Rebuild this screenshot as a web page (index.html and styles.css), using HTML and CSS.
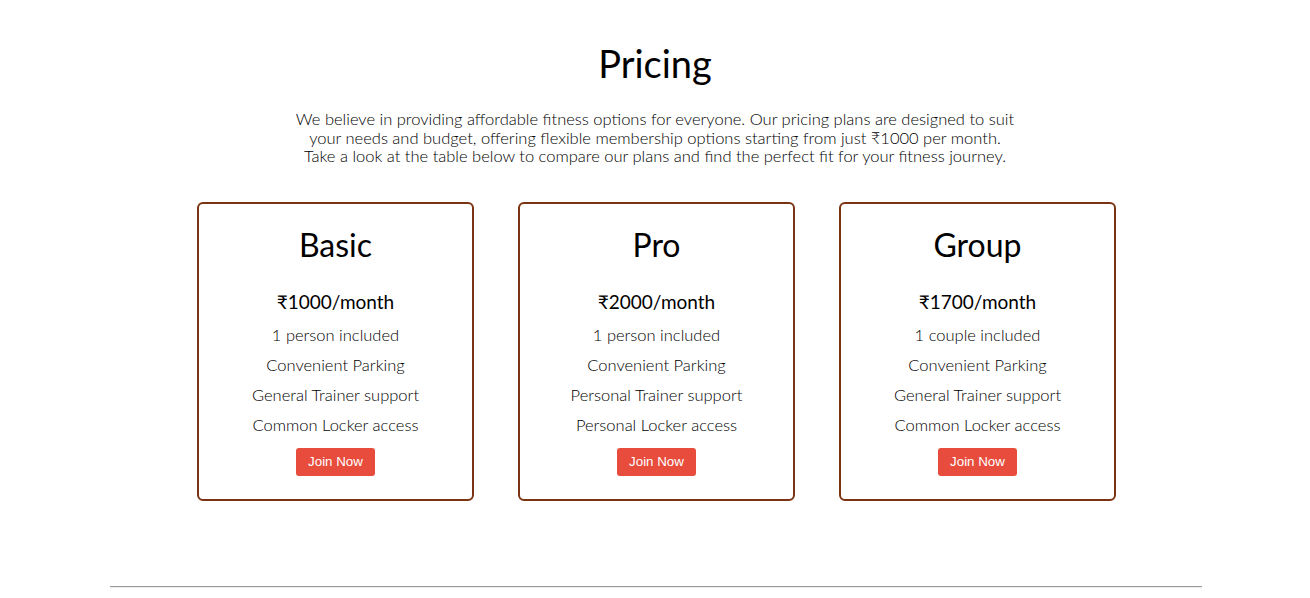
FILE: index.html
```html
<!DOCTYPE html>
<html lang="en">
<head>
<meta charset="utf-8">
<title>Pricing</title>
<link rel="stylesheet" href="styles.css">
</head>
<body>
<section class="pricing">
  <h1 class="pricing-title">Pricing</h1>
  <p class="pricing-intro">We believe in providing affordable fitness options for everyone. Our pricing plans are designed to suit your needs and budget, offering flexible membership options starting from just ₹1000 per month. Take a look at the table below to compare our plans and find the perfect fit for your fitness journey.</p>
  <div class="plans">
    <div class="plan">
      <h2 class="plan-name">Basic</h2>
      <p class="plan-price">₹1000/month</p>
      <ul class="plan-features">
        <li>1 person included</li>
        <li>Convenient Parking</li>
        <li>General Trainer support</li>
        <li>Common Locker access</li>
      </ul>
      <button class="join-btn">Join Now</button>
    </div>
    <div class="plan">
      <h2 class="plan-name">Pro</h2>
      <p class="plan-price">₹2000/month</p>
      <ul class="plan-features">
        <li>1 person included</li>
        <li>Convenient Parking</li>
        <li>Personal Trainer support</li>
        <li>Personal Locker access</li>
      </ul>
      <button class="join-btn">Join Now</button>
    </div>
    <div class="plan">
      <h2 class="plan-name">Group</h2>
      <p class="plan-price">₹1700/month</p>
      <ul class="plan-features">
        <li>1 couple included</li>
        <li>Convenient Parking</li>
        <li>General Trainer support</li>
        <li>Common Locker access</li>
      </ul>
      <button class="join-btn">Join Now</button>
    </div>
  </div>
</section>
<hr class="divider">
</body>
</html>
```
FILE: styles.css
```css
body {
  margin: 0;
  background: #fff;
  color: #000;
  font-family: "Lato", "Open Sans", sans-serif;
}

.pricing {
  padding-top: 39px;
  text-align: center;
}

.pricing-title {
  margin: 0;
  font-size: 38px;
  line-height: 48px;
  font-weight: 400;
}

.pricing-intro {
  margin: 23px auto 0;
  max-width: 721px;
  font-size: 16.5px;
  line-height: 18.5px;
  font-weight: 300;
  color: #000;
}

.plans {
  display: flex;
  justify-content: center;
  gap: 44px;
  margin-top: 36px;
  padding-left: 3px;
}

.plan {
  width: 277px;
  box-sizing: border-box;
  border: 2px solid #7a3411;
  border-radius: 6px;
  padding: 21px 10px 23px;
}

.plan-name {
  margin: 0 0 22px;
  font-size: 32px;
  line-height: 40px;
  font-weight: 400;
}

.plan-price {
  margin: 0 0 3px;
  font-size: 19px;
  line-height: 30px;
  font-weight: 400;
}

.plan-features {
  list-style: none;
  margin: 0;
  padding: 0;
  font-size: 16.5px;
  line-height: 30px;
  font-weight: 300;
  color: #000;
}

.join-btn {
  margin-top: 8px;
  height: 28px;
  padding: 0 12px;
  border: none;
  border-radius: 3px;
  background: #e74c3c;
  color: #fff;
  font-family: "Liberation Sans", Arial, sans-serif;
  font-size: 13.33px;
}

.divider {
  margin: 85px 108px 0 110px;
  border: none;
  border-top: 1px solid #9a9a9a;
  border-bottom: 1px solid #eee;
}
```
